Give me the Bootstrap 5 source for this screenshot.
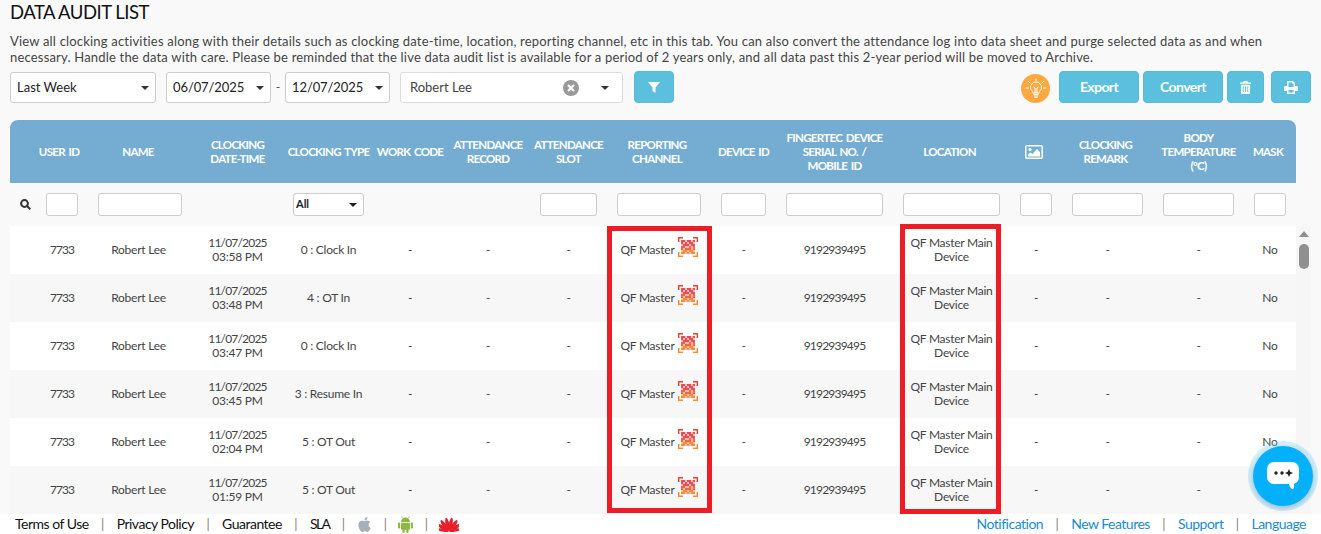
<!DOCTYPE html>
<html lang="en">
<head>
<meta charset="utf-8">
<title>Data Audit List</title>
<link rel="stylesheet" href="https://cdn.jsdelivr.net/npm/bootstrap@5.3.0/dist/css/bootstrap.min.css">
<style>
html,body{height:534px;overflow:hidden}
body{background:#f9f9f9;font-family:"Lato","Liberation Sans",sans-serif;color:#444;font-size:12px;position:relative}
.page-wrap{padding:0 10px;height:514px;overflow:hidden}
.page-title{font-size:18.5px;line-height:25px;margin:0;color:#111;font-weight:400;letter-spacing:-.5px}
.page-desc{font-size:13px;line-height:16px;margin:8px 0 6px;color:#444;letter-spacing:.19px}
.tool-row{height:32px;margin-bottom:17px}
.ctl{height:31px;margin-top:1px;font-size:13px;line-height:1;padding:0 6px;border:1px solid #ccc;border-radius:3px;color:#222;background-color:#fff;
 background-image:url("data:image/svg+xml,%3Csvg xmlns='http://www.w3.org/2000/svg' width='8' height='4'%3E%3Cpath d='M0 0h8L4 4z' fill='%23333'/%3E%3C/svg%3E");background-size:8px 4px;background-position:right 6px center;box-shadow:none}
.ctl-range{width:146px}.ctl-date{width:105px;letter-spacing:-.1px}
.space-ten{margin-left:10px}
.space-btn{margin-left:11px}
.date-dash{width:14px;text-align:center;padding-top:8px;line-height:16px}
.combo{width:223px;height:31px;margin-top:1px;border:1px solid #ddd;border-radius:3px;background:#fff;padding:0 13px 0 9px;font-size:13px;color:#444}
.clear-dot{margin-right:22px;flex:none}
.caret-mini{width:8px;height:4px;flex:none}
.act-btn{height:32px;background:#5bc0de;border:1px solid #55bbd9;border-radius:4px;color:#fff;font-size:14px;font-weight:700;display:flex;align-items:center;justify-content:center;padding:0 0 2px;letter-spacing:-.6px}
.act-btn:hover{background:#5bc0de;color:#fff}
.act-btn svg{margin-top:2px}
.w-filter{width:40px}.w-text{width:80px}.w-trash{width:37px}.w-print{width:40px}
.print-gap{margin-left:7px}
.bulb-round{width:29px;height:29px;border-radius:50%;background:#ffa841;display:flex;align-items:center;justify-content:center;margin-top:3px;margin-right:9px}
.audit-table{table-layout:fixed;width:1301px;margin:0;border-collapse:separate;border-spacing:0;--bs-table-bg:transparent;color:#444}
.audit-table th,.audit-table td{padding:0;border:0;text-align:center;vertical-align:middle;box-shadow:none}
.audit-table thead tr.head-row th{height:63px;background:#75acd2;color:#fff;font-size:11.5px;line-height:14px;font-weight:700;letter-spacing:-.7px;word-spacing:1.5px;text-transform:uppercase}
.audit-table thead tr.head-row th:first-child{border-top-left-radius:8px;padding-left:20px}
.audit-table thead tr.head-row th.th-last{border-top-right-radius:8px}
.audit-table thead tr.head-row th.th-gap{background:transparent}
.audit-table thead tr.head-row th.nudge{padding-right:4px}
.audit-table thead tr.filter-row td{height:43px;background:transparent}
.audit-table tbody td{height:48px;font-size:12px;line-height:14px;letter-spacing:-.25px;color:#444}
.audit-table tbody tr:nth-child(odd) td{background:#fff}
.audit-table tbody tr:nth-child(even) td{background:#f7f7f7}
.audit-table tbody tr:nth-child(n) td.sb-cell{background:#f6f6f6}
.audit-table tbody td.uid-cell{padding-left:26px;letter-spacing:-1px}
.audit-table tbody td.name-cell{padding-right:3px}
.audit-table tbody td.serial-cell{letter-spacing:-.8px}
.date-line{letter-spacing:-.8px}
.fbox{display:block;height:23px;width:calc(100% - 20px);margin:0 auto;border:1px solid #ccc;border-radius:3px;background:#fff;padding:0}
.first-cell{display:flex;align-items:center;padding-left:10px;gap:15px}
.fbox-uid{width:32px;margin:0}
.fsel{width:71px;height:23px;font-size:11px;font-weight:700;padding:0 2px;border:1px solid #ccc;border-radius:3px;color:#222;margin:0 auto;background-color:#fff;
 background-image:url("data:image/svg+xml,%3Csvg xmlns='http://www.w3.org/2000/svg' width='8' height='4'%3E%3Cpath d='M0 0h8L4 4z' fill='%23222'/%3E%3C/svg%3E");background-size:8px 4px;background-position:right 6px center}
.chan{display:inline-flex;align-items:center;gap:3px}
.chan svg{margin-bottom:6px;flex:none}
.anno{position:absolute;border:5px solid #ee1c25;pointer-events:none}
.anno-a{left:607px;top:226px;width:105px;height:287px}
.anno-b{left:900px;top:224px;width:101px;height:290px}
.sb-track{position:absolute;left:1298px;top:226px;width:12px}
.sb-up{display:block;margin:5px auto 0}
.sb-thumb{width:10px;height:25px;border-radius:5px;background:#8f8f8f;margin:7px auto 0}
.foot-bar{height:20px;background:#fff;padding:0 15px;font-size:14px;line-height:20px;display:flex;justify-content:space-between;align-items:center}
.foot-list{display:flex;align-items:center}
.foot-list a{text-decoration:none;color:#111;letter-spacing:-.5px}
.foot-list a.tight-link{letter-spacing:-1.6px}
.foot-right a{color:#1a8ccb}
.foot-list i{font-style:normal;width:28px;text-align:center;color:#8a7a6a;font-size:13px}
.foot-list i.i-narrow{width:26px}
.foot-list svg{display:block}
.chat-fab{position:absolute;left:1248px;top:441px;width:70px;height:70px;border-radius:50%;background:rgba(124,210,245,.35);display:flex;align-items:center;justify-content:center}
.chat-core{width:60px;height:60px;border-radius:50%;background:#05b0fb;box-shadow:0 2px 5px rgba(0,60,110,.25);display:flex;align-items:center;justify-content:center}
</style>
</head>
<body>
<div class="page-wrap">
  <h1 class="page-title">DATA AUDIT LIST</h1>
  <p class="page-desc">View all clocking activities along with their details such as clocking date-time, location, reporting channel, etc in this tab. You can also convert the attendance log into data sheet and purge selected data as and when necessary. Handle the data with care. Please be reminded that the live data audit list is available for a period of 2 years only, and all data past this 2-year period will be moved to Archive.</p>
  <div class="tool-row d-flex align-items-start">
    <select class="form-select ctl ctl-range" aria-label="Range"><option>Last Week</option></select>
    <select class="form-select ctl ctl-date space-ten" aria-label="From"><option>06/07/2025</option></select>
    <span class="date-dash">-</span>
    <select class="form-select ctl ctl-date" aria-label="To"><option>12/07/2025</option></select>
    <div class="combo d-flex align-items-center space-ten">
      <span class="flex-grow-1">Robert Lee</span>
      <svg class="clear-dot" width="16" height="16" viewBox="0 0 16 16"><circle cx="8" cy="8" r="8" fill="#999"/><path d="M5 5l6 6M11 5l-6 6" stroke="#fff" stroke-width="2"/></svg>
      <svg class="caret-mini" viewBox="0 0 8 4"><path d="M0 0h8L4 4z" fill="#333"/></svg>
    </div>
    <button type="button" class="btn act-btn w-filter space-btn" aria-label="Filter"><svg width="12" height="11" viewBox="0 0 12 11"><path d="M0 0h12L7.5 5.500V11L4.500 9V5.500z" fill="#fff"/></svg></button>
    <div class="ms-auto d-flex">
      <div class="bulb-round"><svg width="22" height="22" viewBox="0 0 22 22" fill="none" stroke="#fff" stroke-width="1"><path d="M8 15c0-2-2.500-3-2.500-5.500a5.500 5.500 0 0 1 11 0C16.500 12 14 13 14 15z"/><path d="M8.500 16.500h5M9 18h4M9.500 19.500h3M10 15v-5l-1.500-1M12 15v-5l1.500-1"/><path d="M11 1v2M3.500 3.500l1.500 1.500M18.500 3.500 17 5M1.500 10h2M18.500 10h2" stroke-linecap="round"/></svg></div>
      <button type="button" class="btn act-btn w-text">Export</button>
      <button type="button" class="btn act-btn w-text ms-1">Convert</button>
      <button type="button" class="btn act-btn w-trash ms-1" aria-label="Delete"><svg width="11" height="13" viewBox="0 0 12 14" fill="#fff"><path d="M4 0h4l1 1.500h3v1.500H0V1.500h3zM1 4h10v9a1 1 0 0 1-1 1H2a1 1 0 0 1-1-1zm2 1.500v6.500h1V5.500zm2.500 0v6.500h1V5.500zm2.500 0v6.500h1V5.500z" fill-rule="evenodd"/></svg></button>
      <button type="button" class="btn act-btn w-print print-gap" aria-label="Print"><svg width="14" height="13" viewBox="0 0 14 13" fill="#fff"><path fill-rule="evenodd" d="M3 0h6l2 2v3h1.500A1.500 1.500 0 0 1 14 6.500V10h-3v3H3v-3H0V6.500A1.500 1.500 0 0 1 1.500 5H3zM4.500 1.500V6h5V3H8.500V1.500zm0 7.500v2.500h5V9z"/></svg></button>
    </div>
  </div>

  <table class="table audit-table">
    <colgroup>
      <col style="width:78px"><col style="width:104px"><col style="width:91px"><col style="width:91px"><col style="width:72px"><col style="width:84px"><col style="width:77px"><col style="width:104px"><col style="width:65px"><col style="width:117px"><col style="width:117px"><col style="width:52px"><col style="width:91px"><col style="width:91px"><col style="width:52px"><col style="width:15px">
    </colgroup>
    <thead>
      <tr class="head-row">
        <th>User ID</th><th class="nudge">Name</th><th>Clocking<br>Date-Time</th><th>Clocking Type</th><th>Work Code</th><th>Attendance<br>Record</th><th>Attendance<br>Slot</th><th class="nudge">Reporting<br>Channel</th><th>Device ID</th><th>FingerTec Device<br>Serial No. /<br>Mobile ID</th><th class="nudge">Location</th>
        <th class="nudge"><svg width="18" height="14" viewBox="0 0 18 14"><rect x=".75" y=".75" width="16.500" height="12.500" rx="1" fill="none" stroke="#fff" stroke-width="1.500"/><circle cx="5" cy="4.500" r="1.600" fill="#fff"/><path d="M3 11.500v-2l2.500-2 2 1.500L12 4l3 3v4.500z" fill="#fff"/></svg></th>
        <th class="nudge">Clocking<br>Remark</th><th>Body<br>Temperature<br>(°C)</th><th class="th-last nudge">Mask</th><th class="th-gap"></th>
      </tr>
      <tr class="filter-row">
        <td><div class="first-cell"><svg width="11" height="11" viewBox="0 0 11 11" fill="none" stroke="#333" stroke-width="2"><circle cx="4.500" cy="4.500" r="3.400"/><path d="M7 7l3.300 3.300"/></svg><input class="fbox fbox-uid" aria-label="User ID"></div></td>
        <td><input class="fbox" aria-label="Name"></td>
        <td></td>
        <td><select class="form-select fsel" aria-label="Type"><option>All</option></select></td>
        <td></td><td></td>
        <td><input class="fbox" aria-label="Slot"></td>
        <td><input class="fbox" aria-label="Channel"></td>
        <td><input class="fbox" aria-label="Device"></td>
        <td><input class="fbox" aria-label="Serial"></td>
        <td><input class="fbox" aria-label="Location"></td>
        <td><input class="fbox" aria-label="Image"></td>
        <td><input class="fbox" aria-label="Remark"></td>
        <td><input class="fbox" aria-label="Temp"></td>
        <td><input class="fbox" aria-label="Mask"></td>
        <td></td>
      </tr>
    </thead>
    <tbody id="rows"></tbody>
  </table>
</div>

<div class="foot-bar">
  <div class="foot-list">
    <a href="#">Terms of Use</a><i>|</i><a href="#">Privacy Policy</a><i>|</i><a href="#">Guarantee</a><i>|</i><a href="#" class="tight-link">SLA</a><i>|</i>
    <svg width="15" height="17" viewBox="0 0 16 16" fill="#a7b0b8"><path d="M11.182.008C11.148-.03 9.923.023 8.857 1.180c-1.066 1.156-.902 2.482-.878 2.516.024.034 1.520.087 2.475-1.258.955-1.345.762-2.391.728-2.430Zm3.314 11.733c-.048-.096-2.325-1.234-2.113-3.422.212-2.189 1.675-2.789 1.698-2.854.023-.065-.597-.790-1.254-1.157a3.692 3.692 0 0 0-1.563-.434c-.108-.003-.483-.095-1.254.116-.508.139-1.653.589-1.968.607-.316.018-1.256-.522-2.267-.665-.647-.100-1.333.105-1.824.303-.490.198-1.422.732-2.074 2.214-.652 1.482-.311 3.830-.067 4.560.244.729.625 1.924 1.273 2.796.576.984 1.340 1.667 1.659 1.899.319.232 1.219.386 1.843.067.502-.308 1.408-.485 1.766-.472.357.013 1.061.154 1.782.539.571.197 1.111.115 1.652-.105.541-.221 1.324-1.059 2.238-2.758.347-.790.505-1.217.473-1.282Z"/></svg>
    <i class="i-narrow">|</i>
    <svg width="15" height="17" viewBox="0 0 15 17" fill="#8cb843"><path d="M3 6a4.500 4.500 0 0 1 9 0z"/><path d="M4.500 2 3.500.5M10.500 2l1-1.500" stroke="#8cb843" stroke-width=".8"/><rect x="3" y="6.700" width="9" height="7" rx="1"/><rect x="0" y="6.500" width="2.200" height="6" rx="1.100"/><rect x="12.800" y="6.500" width="2.200" height="6" rx="1.100"/><rect x="4.500" y="12" width="2.200" height="5" rx="1.100"/><rect x="8.300" y="12" width="2.200" height="5" rx="1.100"/></svg>
    <i class="i-narrow">|</i>
    <svg width="20" height="15" viewBox="0 0 20 15" fill="#e8202c"><ellipse cx="10" cy="7" rx="1.900" ry="6.500" transform="rotate(-12 10 14.500)"/><ellipse cx="10" cy="7" rx="1.900" ry="6.500" transform="rotate(-36 10 14.500)"/><ellipse cx="10" cy="7.500" rx="1.900" ry="6.500" transform="rotate(-58 10 14.500)"/><ellipse cx="10" cy="8" rx="1.500" ry="6" transform="rotate(-78 10 14.500)"/><ellipse cx="10" cy="7" rx="1.900" ry="6.500" transform="rotate(12 10 14.500)"/><ellipse cx="10" cy="7" rx="1.900" ry="6.500" transform="rotate(36 10 14.500)"/><ellipse cx="10" cy="7.500" rx="1.900" ry="6.500" transform="rotate(58 10 14.500)"/><ellipse cx="10" cy="8" rx="1.500" ry="6" transform="rotate(78 10 14.500)"/></svg>
  </div>
  <div class="foot-list foot-right">
    <a href="#">Notification</a><i>|</i><a href="#">New Features</a><i>|</i><a href="#">Support</a><i>|</i><a href="#">Language</a>
  </div>
</div>

<div class="anno anno-a"></div>
<div class="anno anno-b"></div>
<div class="sb-track"><svg class="sb-up" width="10" height="6" viewBox="0 0 10 6"><path d="M0 6 5 0l5 6z" fill="#8f8f8f"/></svg><div class="sb-thumb"></div></div>
<div class="chat-fab"><div class="chat-core">
  <svg width="34" height="30" viewBox="0 0 34 30"><path d="M8 1h18a7 7 0 0 1 7 7v8a7 7 0 0 1-5 6.700c0 2 .3 3.500-.2 4.500-.8 1.200-2.300 1-3-.2-.6-1-1.300-2.500-2-4H8a7 7 0 0 1-7-7V8a7 7 0 0 1 7-7z" fill="#fff"/><circle cx="10" cy="12" r="1.700" fill="#222"/><circle cx="16" cy="12" r="1.700" fill="#222"/><path d="M23 8l1.200 2.800L27 12l-2.800 1.200L23 16l-1.200-2.800L19 12l2.800-1.200z" fill="#222"/></svg>
</div></div>

<script src="https://cdn.jsdelivr.net/npm/bootstrap@5.3.0/dist/js/bootstrap.bundle.min.js"></script>
<script>
const data=[["11/07/2025","03:58 PM","0 : Clock In"],["11/07/2025","03:48 PM","4 : OT In"],["11/07/2025","03:47 PM","0 : Clock In"],["11/07/2025","03:45 PM","3 : Resume In"],["11/07/2025","02:04 PM","5 : OT Out"],["11/07/2025","01:59 PM","5 : OT Out"]];
let qr='<rect x="3" y="3" width="14" height="14" fill="#f8bfa2"/>';
const pat=["1101101","1010110","0111011","1100101","1011101","0110110","1101011"];
pat.forEach((r,y)=>[...r].forEach((c,x)=>{if(c==='1')qr+=`<rect x="${3+x*2}" y="${3+y*2}" width="2" height="2" fill="${y<3?'#ec4a5c':y<5?'#f0654a':'#f58a3c'}"/>`}));
const icon=`<svg width="20" height="20" viewBox="0 0 20 20" fill="none">${qr}<path d="M.7 5V.7H5M15 .7h4.300V5" stroke="#e8402f" stroke-width="1.400"/><path d="M.7 15v4.300H5M15 19.300h4.300V15" stroke="#f58a2c" stroke-width="1.400"/></svg>`;
document.getElementById('rows').innerHTML=data.map(d=>`<tr><td class="uid-cell">7733</td><td class="name-cell">Robert Lee</td><td><span class="date-line">${d[0]}</span><br>${d[1]}</td><td>${d[2]}</td><td>-</td><td>-</td><td>-</td><td><span class="chan"><span>QF Master</span>${icon}</span></td><td>-</td><td class="serial-cell">9192939495</td><td>QF Master Main<br>Device</td><td>-</td><td>-</td><td>-</td><td>No</td><td class="sb-cell"></td></tr>`).join('');
</script>
</body>
</html>
